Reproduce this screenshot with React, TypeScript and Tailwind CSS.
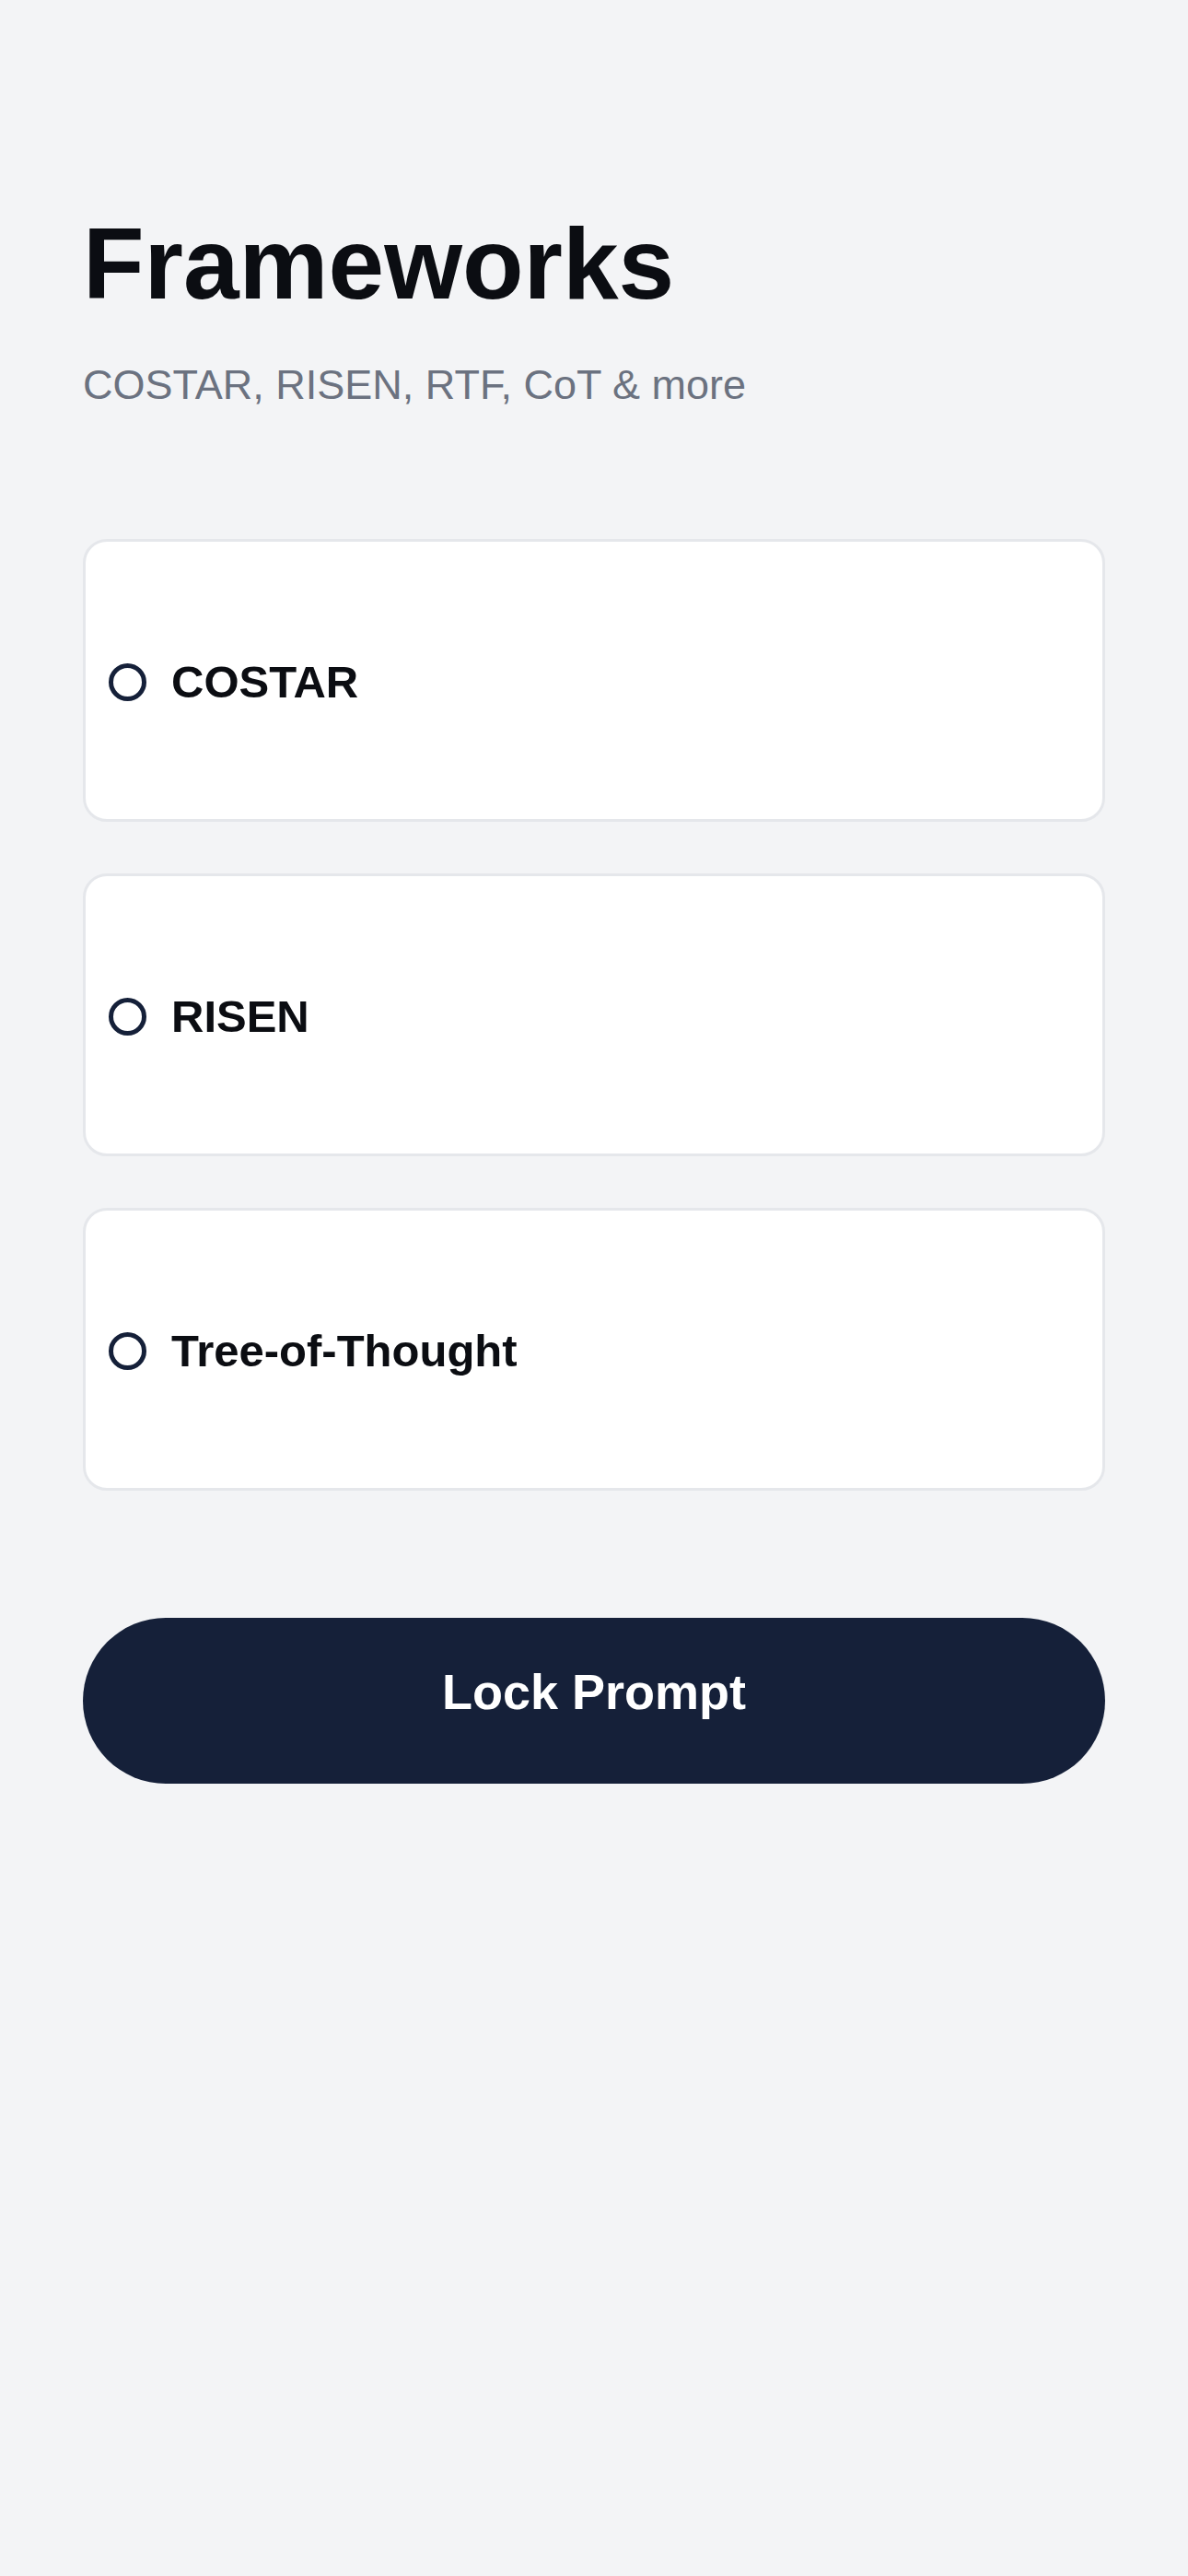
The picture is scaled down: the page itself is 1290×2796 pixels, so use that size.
import { useState } from "react";

const frameworks = ["COSTAR", "RISEN", "Tree-of-Thought"];

export default function App() {
  const [selected, setSelected] = useState<string | null>(null);

  return (
    <div
      className="min-h-[2796px] w-full bg-[#f3f4f6] px-[90px]"
      style={{ fontFamily: '"Liberation Sans", Arial, sans-serif' }}
    >
      <h1 className="pt-[232px] text-[109px] font-bold leading-none text-[#0b0d12]">
        Frameworks
      </h1>
      <p className="mt-[54px] text-[45px] leading-none text-[#6b7280]">
        COSTAR, RISEN, RTF, CoT &amp; more
      </p>

      {/* framework options */}
      <div className="mt-[145px] flex flex-col gap-[56px]">
        {frameworks.map((name) => (
          <button
            key={name}
            onClick={() => setSelected(name)}
            className="flex h-[307px] w-full items-center gap-[27px] rounded-[26px] border-[3px] border-[#e5e7eb] bg-white pl-[25px] pt-[3px] text-left"
          >
            <span className="grid h-[41px] w-[41px] shrink-0 place-items-center rounded-full border-[5px] border-[#152039]">
              {selected === name ? (
                <span className="h-[17px] w-[17px] rounded-full bg-[#152039]" />
              ) : null}
            </span>
            <span className="text-[49px] font-bold leading-none text-[#0b0d12]">
              {name}
            </span>
          </button>
        ))}
      </div>

      <button className="mt-[138px] flex h-[180px] w-full items-center justify-center rounded-full bg-[#152039] pb-[20px] text-[54px] font-bold text-white">
        Lock Prompt
      </button>
    </div>
  );
}
